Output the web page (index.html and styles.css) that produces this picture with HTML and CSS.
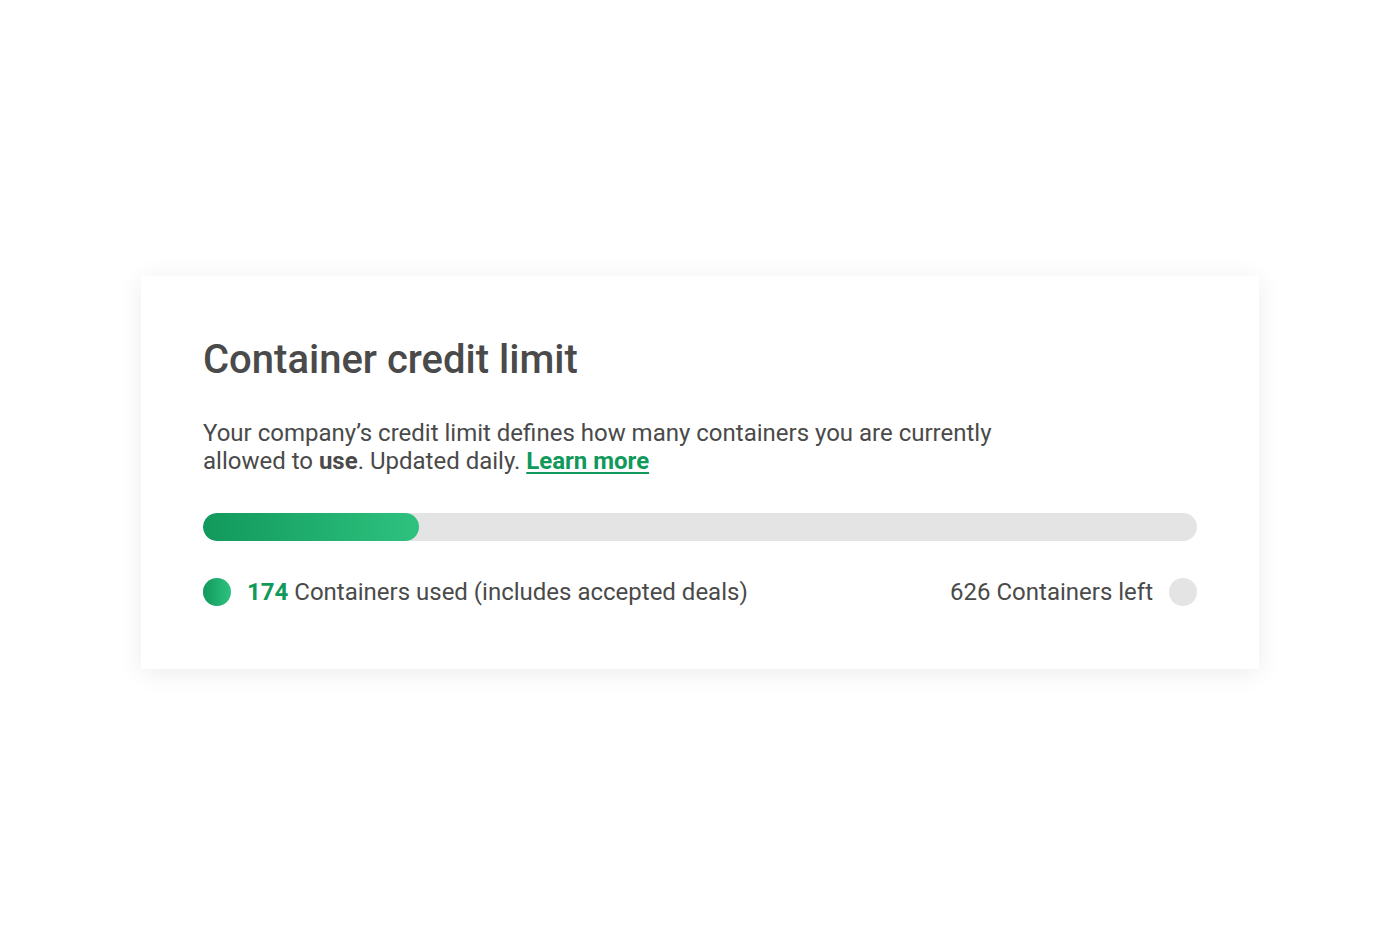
FILE: index.html
```html
<!DOCTYPE html>
<html lang="en">
<head>
    <meta charset="UTF-8">
    <meta name="viewport" content="width=device-width, initial-scale=1.0">
    <title>Container credit limit</title>
    <link rel="stylesheet" href="styles.css">
</head>
<body>
    <div class="page">
        <div class="card">
            <h1 class="title">Container credit limit</h1>
            <p class="desc">
                Your company’s credit limit defines how many containers you are currently<br>
                allowed to <b>use</b>. Updated daily. <a href="#" class="link">Learn more</a>
            </p>

            <!-- Barra de uso -->
            <div class="bar">
                <div class="bar-fill" style="width: 21.75%;"></div>
            </div>

            <div class="legend">
                <div class="legend-item">
                    <span class="dot dot-used"></span>
                    <span><strong class="used-num">174</strong> Containers used (includes accepted deals)</span>
                </div>
                <div class="legend-item">
                    <span>626 Containers left</span>
                    <span class="dot dot-left"></span>
                </div>
            </div>
        </div>
    </div>
</body>
</html>
```

FILE: styles.css
```css
body {
    margin: 0;
    background: #ffffff;
    font-family: Roboto, "Liberation Sans", sans-serif;
    color: #4a4a4a;
}
.page {
    height: 944px;
    display: flex;
    align-items: center;
    justify-content: center;
}
.card {
    width: 1118px;
    box-sizing: border-box;
    padding: 58px 62px 62px;
    background: #ffffff;
    box-shadow: 0 4px 24px rgba(0, 0, 0, 0.08);
}
.title {
    margin: 0;
    font-size: 40px;
    font-weight: 500;
    line-height: 52px;
    color: #4a4a4a;
}
.desc {
    margin: 33px 0 0;
    font-size: 24px;
    line-height: 28px;
}
.desc b {
    font-weight: 700;
}
.link {
    color: #11995b;
    font-weight: 700;
    text-decoration: underline;
    text-underline-offset: 3px;
}
.bar {
    margin-top: 38px;
    height: 28px;
    border-radius: 14px;
    background: #e4e4e4;
    overflow: hidden;
}
.bar-fill {
    height: 100%;
    border-radius: 14px;
    background: linear-gradient(90deg, #11995b, #2ec27f);
}
.legend {
    margin-top: 36px;
    display: flex;
    justify-content: space-between;
    align-items: center;
    font-size: 24px;
    line-height: 30px;
}
.legend-item {
    display: flex;
    align-items: center;
    gap: 16px;
}
.dot {
    width: 28px;
    height: 28px;
    border-radius: 50%;
}
.dot-used {
    background: linear-gradient(90deg, #11995b, #2ec27f);
}
.dot-left {
    background: #e4e4e4;
}
.used-num {
    color: #11995b;
    font-weight: 700;
}
```
